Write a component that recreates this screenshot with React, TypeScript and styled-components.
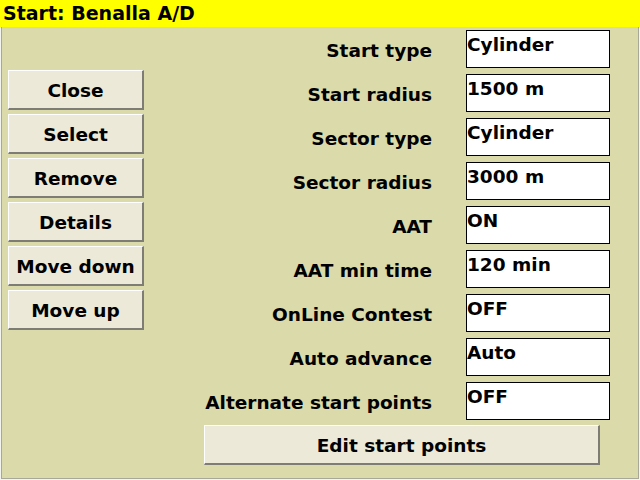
import React from "react";
import styled, { createGlobalStyle } from "styled-components";

const Global = createGlobalStyle`
  html, body { margin: 0; padding: 0; background: #dadaab; }
  body { font-family: "DejaVu Sans", "Liberation Sans", sans-serif; font-weight: bold; }
  * { box-sizing: border-box; }
`;

const Frame = styled.div`
  width: 640px;
  height: 480px;
  display: flex;
  flex-direction: column;
  background: #dadaab;
`;

const TitleBar = styled.div`
  height: 27px;
  background: #ffff00;
  color: #000;
  font-size: 19px;
  line-height: 27px;
  padding-left: 3px;
  white-space: nowrap;
`;

const BodyOuter = styled.div`
  flex: 1;
  border: 1px solid #f4f4ee;
  border-top: none;
  display: flex;
`;

const BodyInner = styled.div`
  flex: 1;
  border: 1px solid #a8a898;
  border-top: none;
  display: flex;
  padding: 3px 0 0 6px;
`;

const LeftCol = styled.div`
  width: 136px;
  padding-top: 40px;
  display: flex;
  flex-direction: column;
  gap: 4px;
`;

const Button = styled.button<{ $w?: number }>`
  width: ${(p) => (p.$w ? `${p.$w}px` : "100%")};
  height: 40px;
  background: #ece9d8;
  border-style: solid;
  border-width: 1px 2px 2px 1px;
  border-color: #ffffff #7d7d75 #7d7d75 #ffffff;
  font-family: "DejaVu Sans", "Liberation Sans", sans-serif;
  font-weight: bold;
  font-size: 18.5px;
  color: #000;
  padding: 2px 0 0 0;
  margin: 0;
  cursor: default;
`;

const RightCol = styled.div`
  margin-left: 60px;
  display: flex;
  flex-direction: column;
`;

const Rows = styled.div`
  display: flex;
  flex-direction: column;
  gap: 6px;
`;

const Row = styled.div`
  display: flex;
  align-items: center;
  height: 38px;
`;

const Label = styled.div`
  width: 228px;
  text-align: right;
  font-size: 18.5px;
  padding-top: 3px;
  white-space: nowrap;
`;

const Value = styled.div`
  margin-left: 34px;
  width: 144px;
  height: 38px;
  background: #fff;
  border: 1px solid #000;
  font-size: 18.5px;
  line-height: 22px;
  padding: 3px 0 0 0;
  white-space: nowrap;
`;

const BottomButton = styled(Button)`
  margin-top: 5px;
`;

const buttons = ["Close", "Select", "Remove", "Details", "Move down", "Move up"];

const rows: [string, string][] = [
  ["Start type", "Cylinder"],
  ["Start radius", "1500 m"],
  ["Sector type", "Cylinder"],
  ["Sector radius", "3000 m"],
  ["AAT", "ON"],
  ["AAT min time", "120 min"],
  ["OnLine Contest", "OFF"],
  ["Auto advance", "Auto"],
  ["Alternate start points", "OFF"],
];

export default function App() {
  return (
    <Frame>
      <Global />
      <TitleBar>Start: Benalla A/D</TitleBar>
      <BodyOuter>
        <BodyInner>
          <LeftCol>
            {buttons.map((b) => (
              <Button key={b}>{b}</Button>
            ))}
          </LeftCol>
          <RightCol>
            <Rows>
              {rows.map(([l, v]) => (
                <Row key={l}>
                  <Label>{l}</Label>
                  <Value>{v}</Value>
                </Row>
              ))}
            </Rows>
            <BottomButton $w={396}>Edit start points</BottomButton>
          </RightCol>
        </BodyInner>
      </BodyOuter>
    </Frame>
  );
}
